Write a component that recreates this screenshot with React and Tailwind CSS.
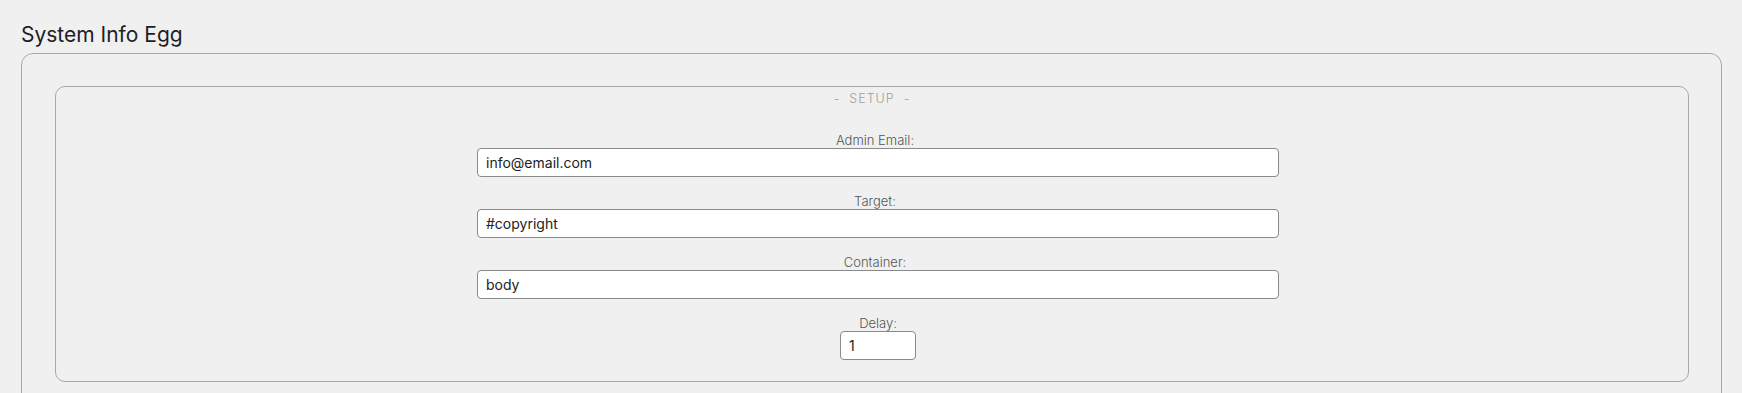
import React from "react";

const fields = [
  { label: "Admin Email:", value: "info@email.com" },
  { label: "Target:", value: "#copyright" },
  { label: "Container:", value: "body" },
];

const Field = ({ label, value }) => (
  <div className="flex flex-col">
    <label className="w-[796px] text-center text-[13px] leading-[16px] font-light text-[#555]">
      {label}
    </label>
    <input
      readOnly
      value={value}
      className="w-[802px] h-[29px] rounded-[4px] border border-[#8a8a8a] bg-white px-2 text-[14px] text-[#222] outline-none"
    />
  </div>
);

export default function App() {
  return (
    <div
      className="min-h-screen bg-[#f0f0f0] pl-[21px] pr-[20px] pt-[21px]"
      style={{ fontFamily: "Inter, 'Noto Sans', sans-serif" }}
    >
      <h1 className="text-[21px] leading-[28px] text-[#1d2125] mb-[4px]">
        System Info Egg
      </h1>
      <div className="rounded-[12px] border border-[#a8a8a8] pl-[33px] pr-[32px] pt-[32px] pb-8">
        <div className="rounded-[10px] border border-[#a8a8a8] pt-[4px] pb-[21px]">
          <div className="text-center text-[12.5px] leading-[16px] font-light tracking-[1px] text-[#a0a0a0]">
            -&nbsp; SETUP &nbsp;-
          </div>
          <div className="mx-auto w-[790px] mt-[25px] flex flex-col gap-4">
            {fields.map((f) => (
              <Field key={f.label} {...f} />
            ))}
            <div className="flex flex-col items-center w-[802px]">
              <label className="text-center text-[13px] leading-[16px] font-light text-[#555]">
                Delay:
              </label>
              <input
                readOnly
                value="1"
                className="w-[76px] h-[29px] rounded-[4px] border border-[#8a8a8a] bg-white px-2 text-[14px] text-[#222] outline-none"
              />
            </div>
          </div>
        </div>
      </div>
    </div>
  );
}
